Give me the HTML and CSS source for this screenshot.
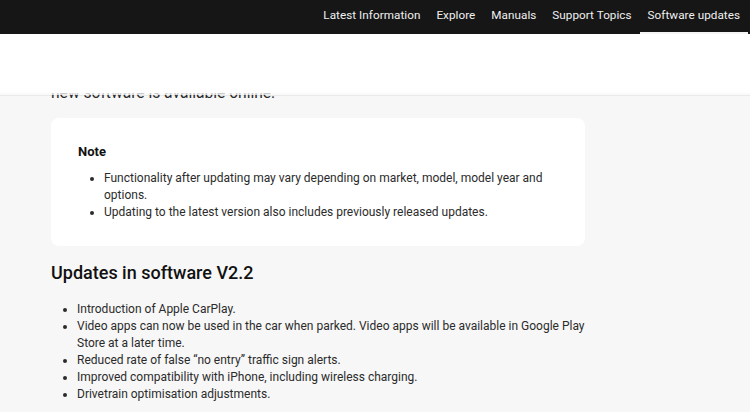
FILE: index.html
```html
<!DOCTYPE html>
<html lang="en">
<head>
<meta charset="utf-8">
<title>Software updates</title>
<link rel="stylesheet" href="styles.css">
</head>
<body>
<header class="topnav">
  <nav class="menu">
    <a class="menu-item" href="#">Latest Information</a>
    <a class="menu-item" href="#">Explore</a>
    <a class="menu-item" href="#">Manuals</a>
    <a class="menu-item" href="#">Support Topics</a>
    <a class="menu-item active" href="#">Software updates</a>
  </nav>
</header>
<div class="subheader"></div>
<main class="content">
  <p class="intro">new software is available online.</p>
  <section class="note">
    <h3 class="note-title">Note</h3>
    <ul class="note-list">
      <li>Functionality after updating may vary depending on market, model, model year and options.</li>
      <li>Updating to the latest version also includes previously released updates.</li>
    </ul>
  </section>
  <h2 class="section-title">Updates in software V2.2</h2>
  <ul class="updates">
    <li>Introduction of Apple CarPlay.</li>
    <li>Video apps can now be used in the car when parked. Video apps will be available in Google Play Store at a later time.</li>
    <li>Reduced rate of false “no entry” traffic sign alerts.</li>
    <li>Improved compatibility with iPhone, including wireless charging.</li>
    <li>Drivetrain optimisation adjustments.</li>
  </ul>
</main>
</body>
</html>
```
FILE: styles.css
```css
* { box-sizing: border-box; }
html, body { margin: 0; padding: 0; }
body {
  background: #f7f7f7;
  font-family: Roboto, "Liberation Sans", sans-serif;
  color: #1e1e1e;
  overflow: hidden;
}
.topnav {
  position: fixed;
  top: 0; left: 0; right: 0;
  height: 34px;
  background: #161616;
  display: flex;
  justify-content: flex-end;
  z-index: 3;
}
.menu {
  display: flex;
  padding-right: 2px;
}
.menu-item {
  display: flex;
  align-items: center;
  padding: 0 8px 3px;
  color: #f0f0f0;
  text-decoration: none;
  font-size: 11.7px;
  letter-spacing: 0.05px;
  border-bottom: 2px solid transparent;
}
.menu-item.active { border-bottom-color: #f4f4f4; }
.subheader {
  position: fixed;
  top: 34px; left: 0; right: 0;
  height: 59px;
  background: #fff;
  box-shadow: 0 2px 0 rgba(255,255,255,0.75), 0 3px 0 rgba(0,0,0,0.05);
  z-index: 2;
}
.content {
  padding: 83px 0 0 51px;
  width: 585px;
}
.intro {
  margin: 0 0 15px;
  font-size: 15.6px;
  line-height: 20px;
  color: #2a2a2a;
}
.note {
  background: #fff;
  border-radius: 8px;
  padding: 25px 27px 25px;
  width: 534px;
}
.note-title {
  margin: 0 0 10px;
  font-size: 13px;
  font-weight: 700;
  line-height: 17px;
  color: #111;
}
.note-list, .updates {
  margin: 0;
  padding-left: 26px;
  font-size: 12px;
  line-height: 17px;
  color: #2b2b2b;
}
.section-title {
  margin: 16px 0 17px;
  font-size: 18px;
  font-weight: 500;
  line-height: 22px;
  color: #111;
}
```
